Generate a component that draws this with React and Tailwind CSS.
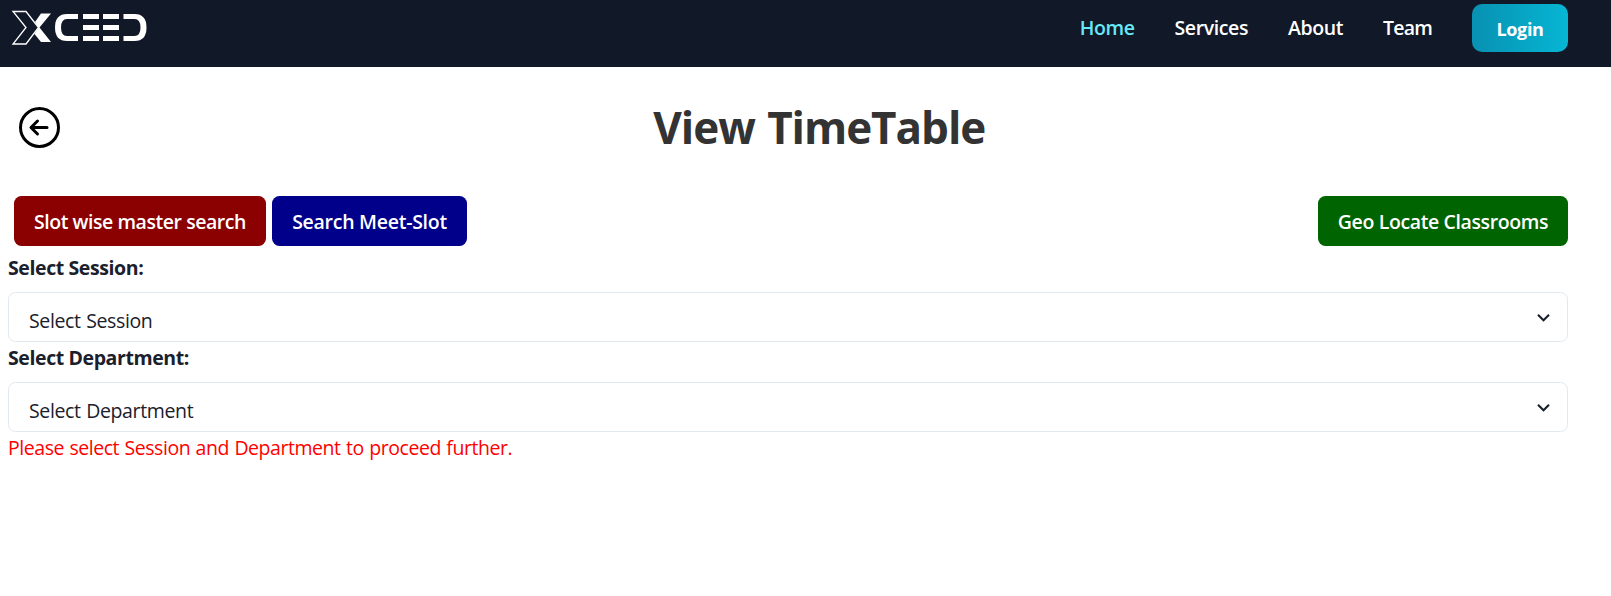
import React from "react";

const Logo = () => (
  <svg className="block h-[46px] w-[150px]" viewBox="0 0 150 46" fill="#fff">
    <path d="M13 11.5H26L38.5 27.5L26 44H13L26 27.5Z" fill="none" stroke="#fff" strokeWidth="1.3" />
    <path d="M41 13.500H51L39.500 27.500L51 42H41L34.500 34L38.500 27.500L35 22Z" />
    <path d="M78 14V19H67Q61 19 61 27.500Q61 36 67 36H78V41H67Q55 41 55 27.500Q55 14 67 14Z" />
    <path d="M83 14h16v5h-16zM83 25h16v5h-16zM83 36h16v5h-16zM103 14h16v5h-16zM103 25h16v5h-16zM103 36h16v5h-16z" />
    <path d="M123.500 14H134.500Q146.500 14 146.500 27.500Q146.500 41 134.500 41H123.500V36H134.500Q140.500 36 140.500 27.500Q140.500 19 134.500 19H123.500Z" />
  </svg>
);

const Select = ({ label, value }) => (
  <div className="h-[90px]">
    <div className="h-[39px] text-[19.5px] leading-[30px] font-bold tracking-[-0.4px]">{label}</div>
    <div className="flex h-[50px] items-center justify-between rounded-[7.5px] border border-[#e2e8f0] pr-[11px] pl-5">
      <span className="pt-[7px] text-[19.5px] leading-[30px] tracking-[-0.36px] [word-spacing:0.8px]">{value}</span>
      <svg className="h-[25px] w-[25px]" viewBox="0 0 24 24" fill="#1a202c">
        <path d="M16.590 8.590L12 13.170 7.410 8.590 6 10l6 6 6-6z" />
      </svg>
    </div>
  </div>
);

export default function App() {
  return (
    <div className="h-[596px] bg-white font-['Open_Sans','Noto_Sans',sans-serif] text-[#1a202c]">
      <header className="flex h-[67px] items-start justify-between bg-[#111827] pr-[43px]">
        <Logo />
        <nav className="flex items-start pt-1 text-[19.5px] font-semibold text-white">
          <div className="flex gap-10 pr-10 leading-[48px] tracking-[-0.4px]">
            <span className="text-[#67e8f9]">Home</span>
            <span>Services</span>
            <span>About</span>
            <span className="tracking-[-0.8px]">Team</span>
          </div>
          <button className="h-12 w-24 rounded-[10px] bg-linear-to-r from-[#0891b2] to-[#06b6d4] pt-0.5 text-[18px] font-bold tracking-[-0.4px]">Login</button>
        </nav>
      </header>
      <main className="pr-[43px] pl-2">
        <div className="flex h-[129px] items-center pb-2 pl-[10.5px]">
          <svg className="h-[41px] w-[41px]" viewBox="0 0 41 41" fill="none" stroke="#000" strokeWidth="3" strokeLinecap="round" strokeLinejoin="round">
            <circle cx="20.500" cy="20.500" r="19" />
            <path d="M28 20.500H12.500M18.500 14L12 20.500L18.500 27" />
          </svg>
          <h1 className="flex-1 pb-[2px] pl-[11px] text-center text-[44px] font-bold tracking-[-1.04px] text-[#333] [word-spacing:2px]">View TimeTable</h1>
        </div>
        <div className="flex h-[50px] gap-1.5 pl-1.5 text-[19.5px] font-semibold text-white">
          <button className="w-[252px] rounded-[7.5px] bg-[#8b0000] pt-0.5 tracking-[-0.45px]">Slot wise master search</button>
          <button className="w-[195px] rounded-[7.5px] bg-[#00008b] pt-0.5 tracking-[-0.27px]">Search Meet-Slot</button>
          <button className="ml-auto w-[250px] rounded-[7.5px] bg-[#006400] pt-0.5 tracking-[-0.38px]">Geo Locate Classrooms</button>
        </div>
        <div className="pt-[7px]">
          <Select label="Select Session:" value="Select Session" />
          <Select label="Select Department:" value="Select Department" />
        </div>
        <p className="text-[19.5px] leading-[30px] tracking-[-0.45px] text-[#f00] [word-spacing:0.8px]">Please select Session and Department to proceed further.</p>
      </main>
    </div>
  );
}
